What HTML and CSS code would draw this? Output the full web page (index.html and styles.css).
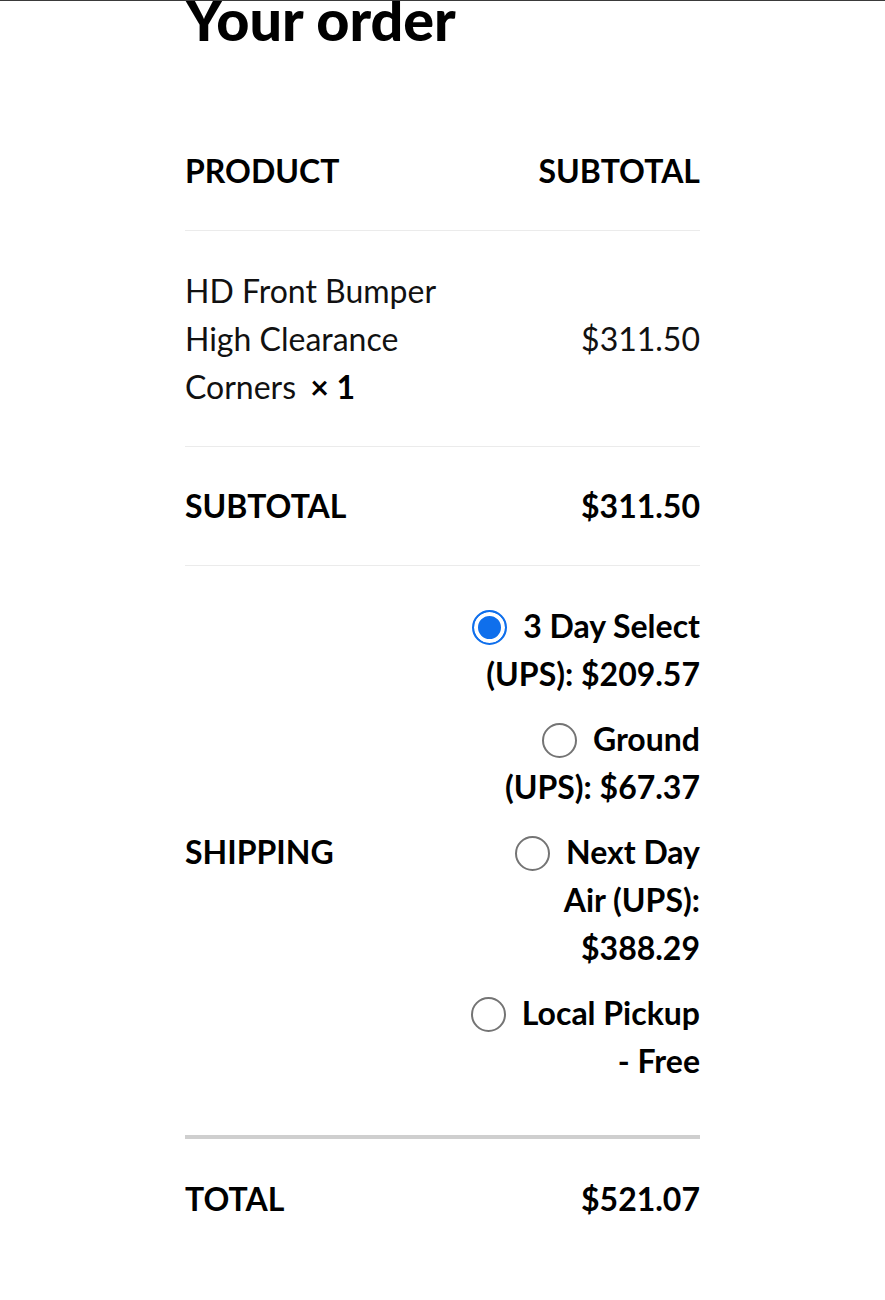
FILE: index.html
```html
<!DOCTYPE html>
<html lang="en">
<head>
<meta charset="utf-8">
<title>Your order</title>
<link rel="stylesheet" href="styles.css">
</head>
<body>
<div class="topline"></div>
<main class="checkout">
  <h3 class="order-title">Your order</h3>
  <table class="order-table">
    <colgroup>
      <col class="col-name">
      <col class="col-total">
    </colgroup>
    <thead>
      <tr>
        <th class="cell-name">Product</th>
        <th class="cell-total">Subtotal</th>
      </tr>
    </thead>
    <tbody>
      <tr class="cart-item">
        <td class="cell-name">HD Front Bumper High Clearance Corners <strong class="qty">×&nbsp;1</strong></td>
        <td class="cell-total">$311.50</td>
      </tr>
    </tbody>
    <tfoot>
      <tr class="subtotal-row">
        <th class="cell-name">Subtotal</th>
        <td class="cell-total strong">$311.50</td>
      </tr>
      <tr class="shipping-row">
        <th class="cell-name">Shipping</th>
        <td class="cell-total">
          <ul class="methods">
            <li><input type="radio" name="ship" id="m1" class="radio" checked><label for="m1">3 Day Select (UPS): $209.57</label></li>
            <li><input type="radio" name="ship" id="m2" class="radio"><label for="m2">Ground (UPS): $67.37</label></li>
            <li><input type="radio" name="ship" id="m3" class="radio"><label for="m3">Next Day Air (UPS): $388.29</label></li>
            <li><input type="radio" name="ship" id="m4" class="radio"><label for="m4">Local Pickup - Free</label></li>
          </ul>
        </td>
      </tr>
      <tr class="total-row">
        <th class="cell-name">Total</th>
        <td class="cell-total strong">$521.07</td>
      </tr>
    </tfoot>
  </table>
</main>
</body>
</html>
```

FILE: styles.css
```css
html, body {
  margin: 0;
  padding: 0;
  background: #fff;
}

body {
  font-family: Lato, "Noto Sans", sans-serif;
  color: #111;
  overflow: hidden;
}

.topline {
  position: absolute;
  top: 0;
  left: 0;
  right: 0;
  height: 1px;
  background: #3a3a3a;
  z-index: 2;
}

.checkout {
  width: 515px;
  margin: 0 auto;
}

.order-title {
  font-family: Lato, sans-serif;
  font-weight: 900;
  font-size: 57.5px;
  line-height: 1.2;
  color: #000;
  margin: -16px 0 60px;
}

.order-table {
  width: 515px;
  table-layout: fixed;
  border-collapse: collapse;
  font-size: 32px;
  line-height: 48px;
}

.col-name { width: 284px; }
.col-total { width: 231px; }

.order-table th,
.order-table td {
  padding: 36px 0 35px;
  vertical-align: middle;
  border-bottom: 1px solid #ebebeb;
}

.order-table thead th {
  padding-top: 34px;
}

.subtotal-row th,
.subtotal-row td {
  padding-top: 35px;
}

.order-table th {
  font-weight: 700;
  text-transform: uppercase;
  color: #000;
}

.cell-name { text-align: left; }
.cell-total { text-align: right; }

.order-table td {
  font-weight: 400;
}

.order-table td.strong,
.qty {
  font-weight: 700;
  color: #000;
}

.qty {
  margin-left: 6px;
}

.shipping-row th,
.shipping-row td {
  padding-bottom: 33px;
  border-bottom: 4px solid #cfcfcf;
}

.methods {
  list-style: none;
  margin: 0;
  padding: 0;
}

.methods li {
  margin: 0 0 17px;
  font-weight: 700;
  color: #000;
  text-align: right;
}

.radio {
  appearance: none;
  -webkit-appearance: none;
  box-sizing: border-box;
  width: 35px;
  height: 35px;
  margin: 0 16px 0 0;
  border: 2px solid #747474;
  border-radius: 50%;
  background: #fff;
  vertical-align: -7px;
}

.radio:checked {
  border-color: #0f6fec;
  background: #0f6fec;
  box-shadow: inset 0 0 0 4px #fff;
}

.total-row th,
.total-row td {
  border-bottom: none;
}
```
